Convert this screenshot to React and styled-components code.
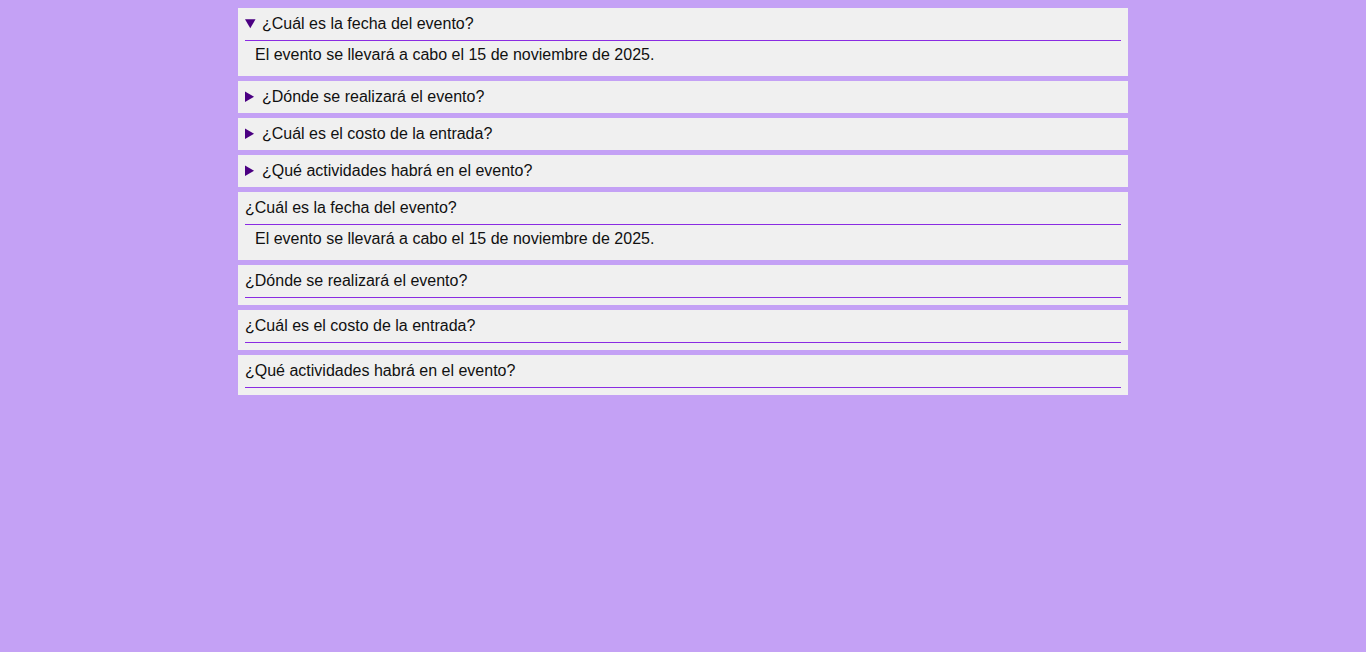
import React, { useState } from "react";
import styled, { createGlobalStyle } from "styled-components";

const GlobalStyle = createGlobalStyle`
  body {
    margin: 8px;
    background: #c4a1f5;
    font-family: "Liberation Sans", Arial, sans-serif;
    font-size: 16px;
    color: #111;
  }
`;

const Wrapper = styled.div`
  max-width: 890px;
  margin: 0 auto;
  display: flex;
  flex-direction: column;
  gap: 5px;
`;

const Details = styled.details`
  background: #f0f0f0;
  padding: 7px;

  &[open] > summary {
    border-bottom: 1px solid #8a2be2;
    padding-bottom: 7px;
  }
`;

const Summary = styled.summary`
  cursor: pointer;
  line-height: 18px;

  &::marker {
    color: #4b0082;
  }
`;

const Item = styled.div`
  background: #f0f0f0;
  padding: 7px;
`;

const Question = styled.div`
  line-height: 18px;
  padding-bottom: 7px;
  border-bottom: 1px solid #8a2be2;
`;

const Answer = styled.p`
  margin: 0;
  padding: 5px 10px;
  line-height: 18px;
`;

const faqs = [
  {
    q: "¿Cuál es la fecha del evento?",
    a: "El evento se llevará a cabo el 15 de noviembre de 2025.",
    open: true,
  },
  { q: "¿Dónde se realizará el evento?", a: "En el centro de convenciones." },
  { q: "¿Cuál es el costo de la entrada?", a: "La entrada es gratuita." },
  { q: "¿Qué actividades habrá en el evento?", a: "Charlas y talleres." },
];

const FaqDetails = ({ q, a, initialOpen }) => {
  const [open, setOpen] = useState(!!initialOpen);
  return (
    <Details open={open} onToggle={(e) => setOpen(e.currentTarget.open)}>
      <Summary>{q}</Summary>
      {open && <Answer>{a}</Answer>}
    </Details>
  );
};

const App = () => {
  return (
    <>
      <GlobalStyle />
      <Wrapper>
        {faqs.map((f) => (
          <FaqDetails key={"d" + f.q} q={f.q} a={f.a} initialOpen={f.open} />
        ))}
        {faqs.map((f) => (
          <Item key={"i" + f.q}>
            <Question>{f.q}</Question>
            {f.open && <Answer>{f.a}</Answer>}
          </Item>
        ))}
      </Wrapper>
    </>
  );
};

export default App;
